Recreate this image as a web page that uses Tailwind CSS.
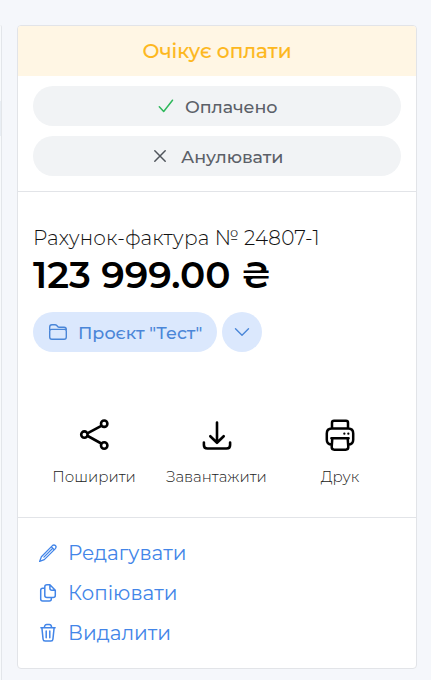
<!DOCTYPE html>
<html lang="uk">
<head>
<meta charset="utf-8">
<title>Рахунок-фактура</title>
<script src="https://cdn.jsdelivr.net/npm/@tailwindcss/browser@4"></script>
</head>
<body class="relative h-[680px] overflow-hidden bg-[#f5f7fb] pt-[25px] pl-[17px] font-['Montserrat','Inter',sans-serif] whitespace-nowrap">
<div class="absolute top-[25px] left-0 h-[655px] w-[2px] rounded-tr-sm border-r border-[#e3e6ea] bg-[#f8fafc]"><div class="mt-[76px] h-[35px] bg-[#e9eef4]"></div></div>
<main class="flex h-[644px] w-[400px] flex-col overflow-hidden rounded-[4px] border border-[#e2e4e8] bg-white">
  <h1 class="flex h-[50px] shrink-0 items-center justify-center bg-[#fff6e4] text-[20px] font-medium text-[#fdb81e] [-webkit-text-stroke:0.15px_#fdb81e]">Очікує оплати</h1>
  <section class="flex h-[116px] shrink-0 flex-col gap-[10px] border-b border-[#e2e4e8] px-[15px] pt-[10px]">
    <button class="flex h-10 items-center rounded-full bg-[#f1f3f5] pl-[124px] text-[17.5px] font-medium tracking-[-0.07px] text-[#5b6068]">
      <svg class="mr-[10px] h-[18px] w-[18px]" viewBox="0 0 18 18" fill="none" stroke="#2fb85c" stroke-width="1.5" stroke-linecap="round" stroke-linejoin="round"><path d="M2.3 9.7 6.7 14.5 15.5 3.2"/></svg>
      <span class="pt-[2px]">Оплачено</span>
    </button>
    <button class="flex h-10 items-center rounded-full bg-[#f1f3f5] pl-[118px] text-[17.5px] font-medium tracking-[-0.07px] text-[#5b6068]">
      <svg class="mr-[12px] h-[18px] w-[18px]" viewBox="0 0 18 18" fill="none" stroke="#50555c" stroke-width="1.5" stroke-linecap="round"><path d="m3.8 3.8 10.4 10.4M14.2 3.8 3.8 14.2"/></svg>
      <span class="pt-[2px]">Анулювати</span>
    </button>
  </section>
  <section class="flex h-[326px] shrink-0 flex-col border-b border-[#e2e4e8] px-[15px] pt-[34px]">
    <div class="h-6 text-[20px] leading-6 font-light tracking-[0.15px] text-[#111]">Рахунок-фактура № 24807-1</div>
    <div class="mt-px h-12 text-[37.5px] leading-[48px] font-semibold text-black">123 999.00 ₴</div>
    <div class="mt-[13px] flex gap-[5px] text-[#4a86d8]">
      <button class="flex h-10 w-[184px] items-center rounded-full bg-[#dbe8fd] pl-[15px] text-[17.5px] font-medium">
        <svg class="mr-[10px] h-5 w-5" viewBox="0 0 20 20" fill="none" stroke="currentColor" stroke-width="1.4" stroke-linejoin="round"><path d="M1.7 8V4.9q0-2.2 2.2-2.2H7q1.1 0 1.8.8l.8 1q.6.7 1.5.7h5q2.2 0 2.2 2.2V8M1.7 9.2q0-1.8 1.8-1.8h13q1.8 0 1.8 1.8v5.9q0 2.2-2.2 2.2H3.9q-2.2 0-2.2-2.2Z"/></svg>
        <span class="pt-[2px]">Проєкт "Тест"</span>
      </button>
      <button class="flex h-10 w-10 items-center justify-center rounded-full bg-[#dbe8fd]" aria-label="Більше">
        <svg class="h-4 w-4" viewBox="0 0 16 16" fill="none" stroke="currentColor" stroke-width="1.4" stroke-linecap="round" stroke-linejoin="round"><path d="m1.5 4.8 6.5 6.4 6.5-6.4"/></svg>
      </button>
    </div>
    <div class="mt-[66px] grid grid-cols-[122px_123px_124px] text-[15px] font-light text-[#222]">
      <div class="flex flex-col items-center">
        <svg class="ml-[2px] h-[34px] w-[34px]" viewBox="0 0 34 34" fill="none" stroke="#000" stroke-width="2.6"><path d="M9.8 15.2 24.2 7.3M9.8 18 24.2 26"/><circle cx="6.4" cy="16.6" r="3.2"/><circle cx="26.2" cy="5.7" r="3.2"/><circle cx="26.2" cy="27.5" r="3.2"/></svg>
        <span class="mt-[13px] leading-6">Поширити</span>
      </div>
      <div class="flex flex-col items-center">
        <svg class="h-[34px] w-[34px]" viewBox="0 0 34 34" fill="none" stroke="#000" stroke-width="2.6" stroke-linecap="round" stroke-linejoin="round"><path d="M17 4.5v20M10.3 18.2l6.7 6.6 6.7-6.6M3.9 24.5v2.4q0 3.6 3.6 3.6h19q3.6 0 3.6-3.6v-2.4"/></svg>
        <span class="mt-[13px] leading-6">Завантажити</span>
      </div>
      <div class="flex flex-col items-center">
        <svg class="h-[34px] w-[34px]" viewBox="0 0 34 34" fill="none" stroke="#000" stroke-width="2.5" stroke-linecap="round" stroke-linejoin="round"><path d="M9 10V4.8q0-2 2-2h12q2 0 2 2V10M8.6 26.8h-.3q-4.5-.6-4.5-5v-6.3q0-5 5-5h16.4q5 0 5 5v6.3q0 4.4-4.5 5h-.3M8.4 20.3h17.2M9.3 20.5l-.6 8.6q0 2.6 2.6 2.6h11.4q2.6 0 2.6-2.6l-.6-8.6"/><path d="M21.3 15.7h.1M25.3 15.7h.1" stroke-width="2.2"/></svg>
        <span class="mt-[13px] leading-6">Друк</span>
      </div>
    </div>
  </section>
  <nav class="flex flex-col pt-[15px] pl-[20px] text-[20px] text-[#4285e8]">
    <a class="flex h-10 items-center"><svg class="mr-[10px] h-5 w-5" viewBox="0 0 20 20" fill="none" stroke="currentColor" stroke-width="1.3" stroke-linejoin="round" stroke-linecap="round"><path d="M1.6 18.4 3.4 13.7 14.4 2.6q1.6-1.3 3 0t0 3L6.3 16.6ZM13.3 3.8l2.9 2.9M14 6 5.9 14.1"/></svg><span>Редагувати</span></a>
    <a class="flex h-10 items-center"><svg class="mr-[10px] h-5 w-5" viewBox="0 0 20 20" fill="none" stroke="currentColor" stroke-width="1.5" stroke-linejoin="round" stroke-linecap="round"><path d="M11.9 1.8H9q-2.2 0-2.2 2v8.8q0 2 2.2 2h6.1q2.2 0 2.2-2V7.2ZM11.9 1.8v3.4q0 2 2 2h3.4M6.8 5.2H4.7q-2 0-2 2v8.9q0 2 2 2h6.6q2 0 2-2v-1.5"/></svg><span>Копіювати</span></a>
    <a class="flex h-10 items-center"><svg class="mr-[10px] h-5 w-5" viewBox="0 0 20 20" fill="none" stroke="currentColor" stroke-width="1.5" stroke-linejoin="round" stroke-linecap="round"><path d="M2.9 4.8h14.2M6.4 4.8q0-3.2 2.4-3.2h2.4q2.4 0 2.4 3.2M3.9 4.8l1.2 11.5q.1 1.8 2 1.8h5.8q1.9 0 2-1.8l1.2-11.5M8.2 8v6.8M11.8 8v6.8"/></svg><span>Видалити</span></a>
  </nav>
</main>
</body>
</html>
